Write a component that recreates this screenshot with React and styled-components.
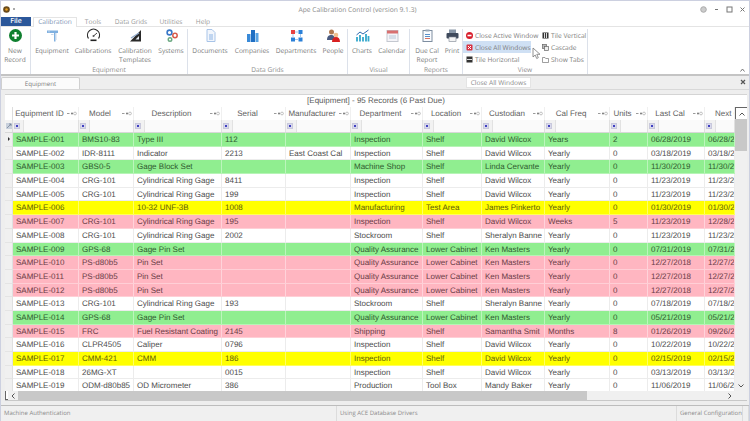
import React from "react";
import styled, { createGlobalStyle } from "styled-components";

const Global = createGlobalStyle`
  html, body { margin: 0; padding: 0; background: #fff; }
  #root { width: 750px; height: 421px; overflow: hidden; }
  * { box-sizing: border-box; text-rendering: geometricPrecision; }
`;

const Window = styled.div`
  position: relative;
  width: 750px;
  height: 421px;
  display: flex;
  flex-direction: column;
  background: #f0f0f0;
  border: 1px solid #ccd0e0;
  border-bottom: 0;
  font-family: "Open Sans", "Noto Sans", sans-serif;
  overflow: hidden;
`;

const TitleBar = styled.div`
  height: 16px;
  flex: none;
  background: #fff;
  display: flex;
  align-items: center;
  padding-left: 2px;
  padding-right: 3px;
`;
const AppLogo = styled.svg`
  width: 7px;
  height: 7px;
  flex: none;
`;
const QuickMark = styled.span`
  width: 2px;
  height: 2px;
  margin-left: 3px;
  background: #aaa;
  flex: none;
`;
const Title = styled.div`
  flex: 1;
  text-align: center;
  font-size: 6.7px;
  color: #8a8a8a;
`;
const WinControls = styled.div`
  display: flex;
  align-items: center;
  gap: 6px;
`;
const WinIcon = styled.svg`
  width: 7px;
  height: 7px;
`;

const TabBar = styled.div`
  height: 10px;
  flex: none;
  background: #fff;
  display: flex;
  align-items: stretch;
  border-bottom: 1px solid #e4e4e4;
  font-size: 6.6px;
  line-height: 9px;
`;
const FileTab = styled.div`
  width: 30px;
  background: #2b579a;
  color: #fff;
  text-align: center;
  font-weight: 600;
  font-size: 7px;
`;
const MenuTab = styled.div`
  width: ${(p) => p.$w}px;
  text-align: center;
  color: ${(p) => (p.$active ? "#7e93b5" : "#9a9a9a")};
  background: #fff;
  ${(p) =>
    p.$active &&
    `margin-left: 2px; border: 1px solid #e4e4e4; border-bottom: 0; height: 10px; line-height: 8px;`}
`;

const Ribbon = styled.div`
  height: 49px;
  flex: none;
  background: #fff;
  display: flex;
  border-bottom: 2px solid #c4c4c4;
  position: relative;
  padding-top: 2px;
`;
const Group = styled.div`
  width: ${(p) => p.$w}px;
  display: flex;
  flex-direction: column;
  border-right: 1px solid #dce1ea;
  height: 45px;
  flex: none;
`;
const GroupBody = styled.div`
  flex: 1;
  display: flex;
  min-height: 0;
`;
const GroupLabel = styled.div`
  height: 9px;
  font-size: 6.6px;
  line-height: 9px;
  text-align: center;
  color: #8d8d8d;
`;
const LargeButton = styled.div`
  width: ${(p) => p.$w}px;
  flex: none;
  display: flex;
  flex-direction: column;
  align-items: center;
  font-size: 6.6px;
  line-height: 9.4px;
  color: #7c7c7c;
  text-align: center;
  white-space: nowrap;
`;
const IconSlot = styled.svg`
  width: 13px;
  height: 13px;
  margin-bottom: 4px;
  flex: none;
  overflow: visible;
`;
const SmallCol = styled.div`
  display: flex;
  flex-direction: column;
  width: ${(p) => p.$w}px;
`;
const SmallButton = styled.div`
  height: 12px;
  display: flex;
  align-items: center;
  gap: 2px;
  padding-left: 3px;
  font-size: 6.6px;
  color: #7c7c7c;
  white-space: nowrap;
  width: ${(p) => (p.$hover ? "68px" : "auto")};
  background: ${(p) => (p.$hover ? "#cfe0f4" : "transparent")};
`;
const SmallIcon = styled.svg`
  width: 7px;
  height: 7px;
  flex: none;
`;
const Collapse = styled.svg`
  position: absolute;
  right: 4px;
  bottom: 2px;
  width: 5px;
  height: 4px;
`;
const Pointer = styled.svg`
  position: absolute;
  left: 531px;
  top: 46px;
  width: 9px;
  height: 13px;
  z-index: 3;
`;

const DocTabs = styled.div`
  height: 13px;
  flex: none;
  display: flex;
  background: #eeeeee;
  position: relative;
  font-size: 6.2px;
  color: #7c7c7c;
  align-items: flex-end;
`;
const DocTab = styled.div`
  width: 79px;
  height: 12px;
  background: #fbfbfb;
  border: 1px solid #d0d0d0;
  border-bottom: 0;
  border-radius: 2px 2px 0 0;
  text-align: center;
  line-height: 11px;
`;
const FloatTab = styled.div`
  width: 65px;
  height: 11px;
  margin-left: 386px;
  background: #fff;
  border: 1px solid #e4e4e4;
  line-height: 10px;
  text-align: center;
  white-space: nowrap;
  margin-bottom: 1px;
  color: #8a8a8a;
  font-size: 6.6px;
`;
const DocClose = styled.svg`
  position: absolute;
  right: 3px;
  top: 3px;
  width: 6px;
  height: 6px;
`;

const Panel = styled.div`
  flex: 1;
  min-height: 0;
  display: flex;
  flex-direction: column;
  padding: 4px 2px 4px 4px;
  background: #eeeeee;
  border-top: 1px solid #d8d8d8;
`;
const Sheet = styled.div`
  flex: 1;
  min-height: 0;
  background: #fff;
  border-top: 1px solid #d4d4d4;
  display: flex;
  flex-direction: column;
  border-bottom: 1px solid #c8c8c8;
  font-family: "Liberation Sans", Arial, sans-serif;
`;
const GridTitle = styled.div`
  height: 12px;
  flex: none;
  text-align: center;
  font-size: 8px;
  line-height: 12px;
  color: #5a5a5a;
`;
const GridWrap = styled.div`
  flex: 1;
  min-height: 0;
  display: flex;
`;
const GridMain = styled.div`
  flex: 1;
  min-width: 0;
  display: flex;
  flex-direction: column;
`;
const HeadRow = styled.div`
  height: 13px;
  flex: none;
  display: flex;
  background: #fff;
`;
const FilterRow = styled.div`
  height: 13px;
  flex: none;
  display: flex;
  background: #f2f2f2;
  border-bottom: 1px solid #d8d8d8;
`;
const Rows = styled.div`
  height: 258px;
  flex: none;
  overflow: hidden;
`;
const rowTone = {
  "#ffffff": "#4c4c4c",
  "#ffb6c1": "#6a3c46",
  "#ffff00": "#5c5c08",
  "#90ee90": "#2f5a2f",
};
const Row = styled.div`
  height: 13.7px;
  display: flex;
  background: ${(p) => p.$bg};
  color: ${(p) => rowTone[p.$bg]};
  border-bottom: 1px solid ${(p) => (p.$bg === "#ffffff" ? "#ececec" : "rgba(255,255,255,.35)")};
`;
const Indicator = styled.div`
  width: 8px;
  flex: none;
  background: #f0f0f0;
  border-right: 1px solid #e0e0e0;
  border-bottom: 1px solid #e4e4e4;
  margin-bottom: -1px;
  display: flex;
  align-items: center;
  justify-content: center;
`;
const Caret = styled.span`
  width: 0;
  height: 0;
  border-left: 2px solid #333;
  border-top: 2px solid transparent;
  border-bottom: 2px solid transparent;
`;
const Cell = styled.div`
  width: ${(p) => p.$w}px;
  flex: none;
  padding: 1px 0 0 3px;
  font-size: 8px;
  line-height: 12px;
  white-space: nowrap;
  overflow: hidden;
  border-right: 1px solid ${(p) => (p.$plain ? "#ececec" : "rgba(255,255,255,.4)")};
`;
const HeadCell = styled.div`
  width: ${(p) => p.$w}px;
  flex: none;
  display: flex;
  align-items: center;
  padding-right: 1px;
  border-right: 1px solid #f0f0f0;
  overflow: hidden;
  font-size: 8px;
  color: #5e5e5e;
  white-space: nowrap;
`;
const HeadText = styled.span`
  flex: 1;
  text-align: center;
  ${(p) => p.$clip && "text-align: left; padding-left: 10px;"}
`;
const SortMark = styled.svg`
  width: 11px;
  height: 5px;
  flex: none;
`;
const FilterCell = styled.div`
  width: ${(p) => p.$w}px;
  flex: none;
  display: flex;
  align-items: center;
  padding-left: 1px;
  border-right: 1px solid #e0e0e0;
`;
const FilterBtn = styled.span`
  width: 6px;
  height: 6px;
  flex: none;
  background: #d8d8ec;
  border: 1px solid #c8c8dc;
  display: flex;
  align-items: center;
  justify-content: center;
  &::after {
    content: "";
    width: 2px;
    height: 2px;
    background: #4040c0;
  }
`;
const FilterField = styled.span`
  align-self: stretch;
  flex: 1;
  margin-left: 3px;
  border-left: 1px solid #e2e2e2;
  background: #fafafa;
`;
const CornerCell = styled.div`
  width: 8px;
  flex: none;
  display: flex;
  align-items: center;
  justify-content: center;
  border-right: 1px solid #ddd;
`;
const CornerIcon = styled.svg`
  width: 6px;
  height: 6px;
`;

const VScroll = styled.div`
  width: 12px;
  flex: none;
  background: #f0f0f0;
  display: flex;
  flex-direction: column;
  align-items: center;
`;
const ArrowTop = styled.div`
  height: 12px;
  width: 100%;
  flex: none;
  display: flex;
  align-items: center;
  justify-content: center;
  background: #fff;
  border-top: 1px solid #666;
  border-left: 1px solid #666;
`;
const ScrollArrow = styled.svg`
  width: 6px;
  height: 4px;
  flex: none;
`;
const SideArrow = styled.svg`
  width: 4px;
  height: 6px;
  flex: none;
`;
const VThumb = styled.div`
  width: 100%;
  height: 32px;
  background: #c8c8c8;
  flex: none;
`;
const VSpace = styled.div`
  flex: 1;
`;
const VFoot = styled.div`
  height: 7px;
  flex: none;
  display: flex;
  align-items: flex-start;
`;
const HScroll = styled.div`
  height: 9px;
  flex: none;
  display: flex;
  align-items: stretch;
  background: #f0f0f0;
`;
const HEdge = styled.div`
  width: 3px;
  flex: none;
  border-left: 1px solid #666;
  border-bottom: 1px solid #666;
  background: #fff;
`;
const HArrow = styled.div`
  width: 10px;
  flex: none;
  display: flex;
  align-items: center;
  justify-content: center;
`;
const HThumb = styled.div`
  width: 569px;
  flex: none;
  background: #c8c8c8;
`;
const HTrack = styled.div`
  flex: 1;
`;
const HEnd = styled.div`
  width: 12px;
  flex: none;
`;
const StatusBar = styled.div`
  height: 16px;
  flex: none;
  display: flex;
  background: #f0f0f0;
  border-top: 1px solid #bdbdbd;
  font-size: 6px;
  color: #8a8a8a;
`;
const StatusItem = styled.div`
  width: ${(p) => p.$w}px;
  flex: ${(p) => (p.$w ? "none" : "1")};
  line-height: 15px;
  padding-left: 3px;
  border-right: 1px solid #dcdcdc;
  white-space: nowrap;
`;

const cols = [66, 55, 88, 64, 65, 72, 59, 63, 65, 38, 57, 30];
const heads = ["Equipment ID", "Model", "Description", "Serial", "Manufacturer", "Department", "Location", "Custodian", "Cal Freq", "Units", "Last Cal", "Next Cal"];

const G = "#90ee90", W = "#ffffff", Y = "#ffff00", P = "#ffb6c1";
const CYL = "Cylindrical Ring Gage";
const DW = ["Inspection", "Shelf", "David Wilcox"];
const QA = ["Quality Assurance", "Lower Cabinet", "Ken Masters"];
const rows = [
  [G, "001", "BMS10-83", "Type III", "112", "", ...DW, "Years", "2", "06/28/2019", "06/28/2019"],
  [W, "002", "IDR-8111", "Indicator", "2213", "East Coast Cal", ...DW, "Yearly", "0", "03/18/2019", "03/18/2019"],
  [G, "003", "GBS0-5", "Gage Block Set", "", "", "Machine Shop", "Shelf", "Linda Cervante", "Yearly", "0", "11/30/2019", "11/30/2019"],
  [W, "004", "CRG-101", CYL, "8411", "", ...DW, "Yearly", "0", "11/23/2019", "11/23/2019"],
  [W, "005", "CRG-101", CYL, "199", "", ...DW, "Yearly", "0", "11/23/2019", "11/23/2019"],
  [Y, "006", "", "10-32 UNF-3B", "1008", "", "Manufacturing", "Test Area", "James Pinkerto", "Yearly", "0", "01/30/2019", "01/30/2019"],
  [P, "007", "CRG-101", CYL, "195", "", ...DW, "Weeks", "5", "11/23/2019", "12/28/2019"],
  [W, "008", "CRG-101", CYL, "2002", "", "Stockroom", "Shelf", "Sheralyn Banne", "Yearly", "0", "11/23/2019", "11/23/2019"],
  [G, "009", "GPS-68", "Gage Pin Set", "", "", ...QA, "Yearly", "0", "07/31/2019", "07/31/2019"],
  [P, "010", "PS-d80b5", "Pin Set", "", "", ...QA, "Yearly", "0", "12/27/2018", "12/27/2019"],
  [P, "011", "PS-d80b5", "Pin Set", "", "", ...QA, "Yearly", "0", "12/27/2018", "12/27/2019"],
  [P, "012", "PS-d80b5", "Pin Set", "", "", ...QA, "Yearly", "0", "12/27/2018", "12/27/2019"],
  [W, "013", "CRG-101", CYL, "193", "", "Stockroom", "Shelf", "Sheralyn Banne", "Yearly", "0", "07/18/2019", "07/18/2019"],
  [G, "014", "GPS-68", "Gage Pin Set", "", "", ...QA, "Yearly", "0", "05/21/2019", "05/21/2019"],
  [P, "015", "FRC", "Fuel Resistant Coating", "2145", "", "Shipping", "Shelf", "Samantha Smit", "Months", "8", "01/26/2019", "09/26/2019"],
  [W, "016", "CLPR4505", "Caliper", "0796", "", ...DW, "Yearly", "0", "10/22/2019", "10/22/2019"],
  [Y, "017", "CMM-421", "CMM", "186", "", ...DW, "Yearly", "0", "02/15/2019", "02/15/2019"],
  [W, "018", "26MG-XT", "", "0015", "", ...DW, "Yearly", "0", "03/13/2019", "03/13/2019"],
  [W, "019", "ODM-d80b85", "OD Micrometer", "386", "", "Production", "Tool Box", "Mandy Baker", "Yearly", "0", "11/06/2019", "11/06/2019"],
];

const icons = {
  plus: (
    <>
      <circle cx="6.5" cy="6.5" r="6.5" fill="#0f7f2f" />
      <path d="M6.5 3v7M3 6.5h7" stroke="#fff" strokeWidth="2.2" />
    </>
  ),
  equipment: (
    <>
      <path d="M1 1.5h11v2.5H9.5v8.5H8V4H1z" fill="#7fb0e0" />
      <path d="M10 4v7M5 5.5h2.5M3 1.5v2" stroke="#c8d8ec" strokeWidth="1" />
    </>
  ),
  gauge: (
    <>
      <path d="M1.5 9.5a6 6 0 1 1 10 0" fill="#fff" stroke="#2c2c2c" strokeWidth="1.2" />
      <path d="M6.5 7L10 4" stroke="#444" strokeWidth="1" />
      <circle cx="6.5" cy="7" r="1" fill="#555" />
      <rect x="3.5" y="10.5" width="6" height="1.6" fill="#222" />
    </>
  ),
  templates: (
    <>
      <path d="M1 12.5L12 1v11.5z" fill="#2a2a2a" />
      <path d="M6.5 10.5L10 7v3.5z" fill="#e8eef6" />
      <path d="M2 9l8-5" stroke="#8fa8c8" strokeWidth="1.2" />
    </>
  ),
  systems: (
    <>
      <circle cx="4.5" cy="3.5" r="2.4" fill="none" stroke="#3a78c8" strokeWidth="1.6" />
      <circle cx="10" cy="6.5" r="2.2" fill="none" stroke="#d85a4a" strokeWidth="1.5" />
      <circle cx="5" cy="10.5" r="1.8" fill="none" stroke="#6aa880" strokeWidth="1.4" />
    </>
  ),
  documents: (
    <>
      <path d="M3 .5h5l3 3v9H3z" fill="#f2f6fc" stroke="#a8c4e8" />
      <path d="M5 6h4M5 8h4M5 10h4" stroke="#8db4e4" />
    </>
  ),
  companies: (
    <>
      <rect x="1" y="5" width="3.5" height="8" fill="#3a8ad8" />
      <rect x="5" y="1" width="4" height="12" fill="#1f6fc4" />
      <rect x="9.5" y="4" width="3" height="9" fill="#5aa4e4" />
    </>
  ),
  departments: (
    <>
      <rect x="1" y="1" width="4" height="4" fill="#e84040" />
      <rect x="8.5" y="1" width="4" height="4" fill="#2a80d8" />
      <rect x="1" y="8.5" width="4" height="4" fill="#2a80d8" />
      <rect x="8.5" y="8.5" width="4" height="4" fill="#2a80d8" />
      <path d="M3 5v3.5M10.5 5v3.5M5 3h3.5M5 10.5h3.5" stroke="#a8c8ec" />
    </>
  ),
  people: (
    <>
      <circle cx="4.5" cy="3" r="2.5" fill="#b07850" />
      <path d="M0 11c0-4 2-5 4.5-5S8 8 8 11z" fill="#4a5a80" />
      <circle cx="9" cy="6" r="2.3" fill="#f0c090" />
      <path d="M5 13c0-3.5 1.5-5 4-5s4 1.5 4 5z" fill="#d82020" />
    </>
  ),
  charts: (
    <>
      <path d="M1 12.5V8M4 12.5V6M7 12.5V8M10 12.5V5M12.5 12.5V7" stroke="#35a8cc" strokeWidth="1.8" />
      <path d="M.5 6L4 3l3 2 5.5-4" stroke="#2c6ab0" fill="none" />
    </>
  ),
  calendar: (
    <>
      <rect x="1" y="1.5" width="11" height="11" fill="#f4f4f8" stroke="#c4c8d0" />
      <rect x="1" y="1.5" width="11" height="3" fill="#d87070" />
      <path d="M3 7h7M3 9h7" stroke="#b8c8d8" />
    </>
  ),
  report: (
    <>
      <rect x="2" y="1.5" width="9" height="11" fill="#fafcff" stroke="#7e8ea0" />
      <rect x="4.5" y=".5" width="4" height="2" fill="#98a8b8" />
      <path d="M4 5.5h5M4 7.5h5" stroke="#5a90c8" />
      <path d="M4 9.5h5" stroke="#d87060" />
    </>
  ),
  printer: (
    <>
      <rect x="3" y=".5" width="7" height="4" fill="#8a98a8" />
      <rect x=".5" y="4" width="12" height="5.5" rx="1" fill="#3f4a5c" />
      <rect x="3" y="8" width="7" height="4.5" fill="#f4f4f4" stroke="#7a8290" strokeWidth=".6" />
    </>
  ),
};

const large = [
  { w: 30, label: null, buttons: [{ w: 28, icon: "plus", t: ["New", "Record"] }] },
  {
    w: 157, label: "Equipment",
    buttons: [
      { w: 42, icon: "equipment", t: ["Equipment"] },
      { w: 40, icon: "gauge", t: ["Calibrations"] },
      { w: 44, icon: "templates", t: ["Calibration", "Templates"] },
      { w: 28, icon: "systems", t: ["Systems"] },
    ],
  },
  {
    w: 160, label: "Data Grids",
    buttons: [
      { w: 44, icon: "documents", t: ["Documents"] },
      { w: 40, icon: "companies", t: ["Companies"] },
      { w: 48, icon: "departments", t: ["Departments"] },
      { w: 26, icon: "people", t: ["People"] },
    ],
  },
  {
    w: 62, label: "Visual",
    buttons: [
      { w: 28, icon: "charts", t: ["Charts"] },
      { w: 32, icon: "calendar", t: ["Calendar"] },
    ],
  },
  {
    w: 53, label: "Reports",
    buttons: [
      { w: 34, icon: "report", t: ["Due Cal", "Report"] },
      { w: 16, icon: "printer", t: ["Print"] },
    ],
  },
];

const Win = {
  closeActive: (
    <>
      <circle cx="3.5" cy="3.5" r="3.5" fill="#d81e2c" />
      <rect x="1.5" y="2.7" width="4" height="1.6" fill="#fff" />
    </>
  ),
  closeAll: (
    <>
      <rect x=".5" y=".5" width="6" height="6" rx="1" fill="#d83040" />
      <path d="M2 2l3 3M5 2L2 5" stroke="#fff" />
    </>
  ),
  tileH: (
    <>
      <rect x=".5" y=".5" width="6" height="6" fill="#333" />
      <path d="M1 3.5h5" stroke="#ddd" />
    </>
  ),
  tileV: (
    <>
      <rect x=".5" y=".5" width="6" height="6" fill="#333" />
      <path d="M2.5 1v5M4.5 1v5" stroke="#ddd" />
    </>
  ),
  cascade: (
    <>
      <rect x=".5" y=".5" width="4" height="4" fill="#bbb" stroke="#666" strokeWidth=".7" />
      <rect x="2.5" y="2.5" width="4" height="4" fill="#eee" stroke="#666" strokeWidth=".7" />
    </>
  ),
  tabs: <path d="M.5 1.5h2.5l.7 1h2.8v4H.5z" fill="#fff" stroke="#777" strokeWidth=".7" />,
};

const Sort = () => (
  <SortMark viewBox="0 0 11 5">
    <path d="M1 2.5h2.5" stroke="#9a9a9a" />
    <circle cx="6" cy="2.5" r="1" fill="#777" />
    <circle cx="9" cy="2.5" r="1.4" fill="none" stroke="#aaa" strokeWidth=".7" />
  </SortMark>
);

export default function App() {
  return (
    <Window>
      <Global />
      <TitleBar>
        <AppLogo viewBox="0 0 7 7">
          <circle cx="3.5" cy="3.5" r="3.3" fill="#6a4a1a" />
          <circle cx="3.5" cy="3.5" r="1.3" fill="#e8a020" />
        </AppLogo>
        <QuickMark />
        <Title>Ape Calibration Control (version 9.1.3)</Title>
        <WinControls>
          <WinIcon viewBox="0 0 7 7">
            <circle cx="3.5" cy="3.5" r="2.8" fill="#ccc" stroke="#aaa" />
          </WinIcon>
          <WinIcon viewBox="0 0 7 7">
            <path d="M2 3.5h3" stroke="#777" />
          </WinIcon>
          <WinIcon viewBox="0 0 7 7">
            <rect x="1" y="1" width="5" height="5" fill="none" stroke="#777" />
          </WinIcon>
          <WinIcon viewBox="0 0 7 7">
            <path d="M1.5 1.5l4 4M5.5 1.5l-4 4" stroke="#777" />
          </WinIcon>
        </WinControls>
      </TitleBar>
      <TabBar>
        <FileTab>File</FileTab>
        <MenuTab $active $w={44}>Calibration</MenuTab>
        <MenuTab $w={32}>Tools</MenuTab>
        <MenuTab $w={44}>Data Grids</MenuTab>
        <MenuTab $w={36}>Utilities</MenuTab>
        <MenuTab $w={28}>Help</MenuTab>
      </TabBar>
      <Ribbon>
        {large.map((g, i) => (
          <Group key={i} $w={g.w}>
            <GroupBody>
              {g.buttons.map((b) => (
                <LargeButton key={b.icon} $w={b.w}>
                  <IconSlot viewBox="0 0 13 13">{icons[b.icon]}</IconSlot>
                  {b.t.map((l) => (
                    <div key={l}>{l}</div>
                  ))}
                </LargeButton>
              ))}
            </GroupBody>
            <GroupLabel>{g.label}</GroupLabel>
          </Group>
        ))}
        <Group $w={125}>
          <GroupBody>
            <SmallCol $w={76}>
              <SmallButton>
                <SmallIcon viewBox="0 0 7 7">{Win.closeActive}</SmallIcon>Close Active Window
              </SmallButton>
              <SmallButton $hover>
                <SmallIcon viewBox="0 0 7 7">{Win.closeAll}</SmallIcon>Close All Windows
              </SmallButton>
              <SmallButton>
                <SmallIcon viewBox="0 0 7 7">{Win.tileH}</SmallIcon>Tile Horizontal
              </SmallButton>
            </SmallCol>
            <SmallCol $w={46}>
              <SmallButton>
                <SmallIcon viewBox="0 0 7 7">{Win.tileV}</SmallIcon>Tile Vertical
              </SmallButton>
              <SmallButton>
                <SmallIcon viewBox="0 0 7 7">{Win.cascade}</SmallIcon>Cascade
              </SmallButton>
              <SmallButton>
                <SmallIcon viewBox="0 0 7 7">{Win.tabs}</SmallIcon>Show Tabs
              </SmallButton>
            </SmallCol>
          </GroupBody>
          <GroupLabel>View</GroupLabel>
        </Group>
        <Collapse viewBox="0 0 5 4">
          <path d="M.5 3.5L2.5 1l2 2.5" fill="none" stroke="#777" />
        </Collapse>
      </Ribbon>
      <Pointer viewBox="0 0 9 13">
        <path d="M1 1v9l2.2-2 1.5 3.5 1.600-.8L4.800 7.300H8z" fill="#fff" stroke="#777" strokeWidth=".8" />
      </Pointer>
      <DocTabs>
        <DocTab>Equipment</DocTab>
        <FloatTab>Close All Windows</FloatTab>
        <DocClose viewBox="0 0 6 6">
          <path d="M1 1l4 4M5 1L1 5" stroke="#555" strokeWidth="1.2" />
        </DocClose>
      </DocTabs>
      <Panel>
        <Sheet>
          <GridTitle>[Equipment] - 95 Records (6 Past Due)</GridTitle>
          <GridWrap>
            <GridMain>
              <HeadRow>
                <CornerCell />
                {heads.map((h, i) => (
                  <HeadCell key={h} $w={cols[i]}>
                    <HeadText $clip={i === 11}>{h}</HeadText>
                    {i < 11 && <Sort />}
                  </HeadCell>
                ))}
              </HeadRow>
              <FilterRow>
                <CornerCell>
                  <CornerIcon viewBox="0 0 6 6">
                    <rect width="6" height="6" fill="#c8d0dc" />
                    <path d="M1 5l4-4M3 1h2v2" stroke="#6a7a90" strokeWidth=".7" fill="none" />
                  </CornerIcon>
                </CornerCell>
                {heads.map((h, i) => (
                  <FilterCell key={h} $w={cols[i]}>
                    <FilterBtn />
                    <FilterField />
                  </FilterCell>
                ))}
              </FilterRow>
              <Rows>
                {rows.map(([bg, id, ...rest], r) => (
                  <Row key={id} $bg={bg}>
                    <Indicator>{r === 0 && <Caret />}</Indicator>
                    {[`SAMPLE-${id}`, ...rest].map((c, i) => (
                      <Cell key={i} $w={cols[i]} $plain={bg === W}>
                        {c}
                      </Cell>
                    ))}
                  </Row>
                ))}
              </Rows>
            </GridMain>
            <VScroll>
              <ArrowTop>
                <ScrollArrow viewBox="0 0 6 4">
                  <path d="M.5 3.5L3 1l2.5 2.5" fill="none" stroke="#555" />
                </ScrollArrow>
              </ArrowTop>
              <VThumb />
              <VSpace />
              <VFoot>
                <ScrollArrow viewBox="0 0 6 4">
                  <path d="M.5.5L3 3 5.5.5" fill="none" stroke="#555" />
                </ScrollArrow>
              </VFoot>
            </VScroll>
          </GridWrap>
          <HScroll>
            <HEdge />
            <HArrow>
              <SideArrow viewBox="0 0 4 6">
                <path d="M3.500.5L1 3l2.500 2.500" fill="none" stroke="#555" />
              </SideArrow>
            </HArrow>
            <HThumb />
            <HTrack />
            <HArrow>
              <SideArrow viewBox="0 0 4 6">
                <path d="M.5.5L3 3 .5 5.500" fill="none" stroke="#555" />
              </SideArrow>
            </HArrow>
            <HEnd />
          </HScroll>
        </Sheet>
      </Panel>
      <StatusBar>
        <StatusItem $w={336}>Machine Authentication</StatusItem>
        <StatusItem $w={340}>Using ACE Database Drivers</StatusItem>
        <StatusItem $w={66}>General Configuration</StatusItem>
        <StatusItem />
      </StatusBar>
    </Window>
  );
}
